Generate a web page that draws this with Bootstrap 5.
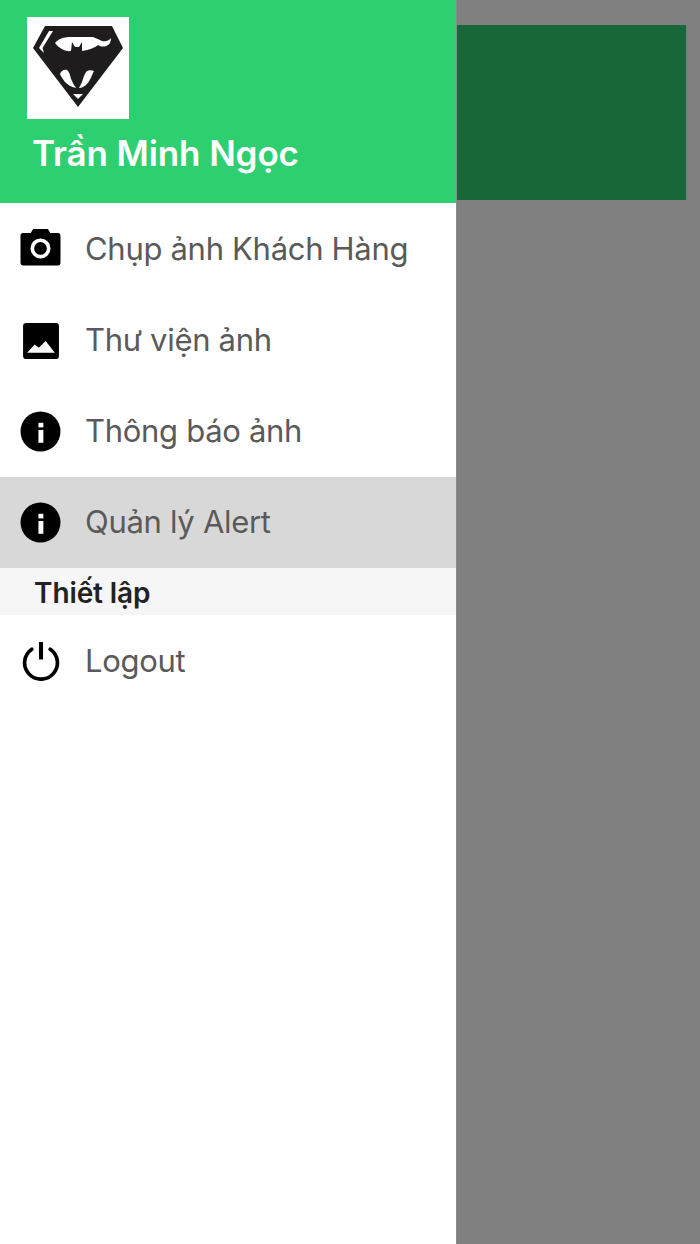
<!DOCTYPE html>
<html lang="vi">
<head>
    <meta charset="UTF-8">
    <meta name="viewport" content="width=device-width, initial-scale=1.0">
    <title>Menu</title>
    <link href="https://cdn.jsdelivr.net/npm/bootstrap@5.3.0/dist/css/bootstrap.min.css" rel="stylesheet">
    <style>
        html, body { height: 100%; }
        body { font-family: Inter, "Noto Sans", sans-serif; background: #808080; overflow: hidden; }
        .drawer { width: 456px; background: #fff; }
        .drawer-head { height: 203px; background: #2ecf71; padding: 17px 0 0 27px; }
        .logo-box { width: 102px; height: 102px; background: #fff; }
        .user-name { font-size: 35px; font-weight: 600; color: #fff; margin: 14px 0 0 5px; line-height: 40px; letter-spacing: -0.1px; }
        .menu-list { padding-top: 1px; }
        .menu-row { height: 91px; padding-left: 20px; gap: 24px; color: #5a5a5a; font-size: 31px; letter-spacing: -0.3px; }
        .menu-row svg { width: 41px; height: 41px; flex: none; }
        .menu-row.is-active { background: #d8d8d8; }
        .menu-section { height: 47px; background: #f6f6f6; padding-left: 34px; font-size: 28px; font-weight: 600; color: #222; line-height: 51px; letter-spacing: -0.1px; }
        .logout-label { padding-top: 2px; }
        .backdrop { background: #808080; border-left: 1px solid #8c8c8c; }
        .dim-block { height: 175px; margin: 25px 13px 0 0; background: #18673a; border-right: 1px solid #747f78; }
    </style>
</head>
<body>
    <div class="d-flex h-100">
        <!-- menu -->
        <div class="drawer h-100">
            <div class="drawer-head">
                <div class="logo-box d-flex align-items-center justify-content-center">
                    <svg width="102" height="102" viewBox="0 0 102 102">
                        <path fill="#1f1c1e" d="M18 9H85L96 31L51 90L6 31Z"/>
                        <path fill="#fff" d="M22 14H26L15.5 31L17 36L12 31Z"/>
                        <path fill="#fff" d="M28 26C31 22 37 20 43 20H66L73 23C76 25 81 25 84 21C84 24 83 27 81 28C78 30 74 30 71 28C69 30 62 33 55 34V25L52 30H48L45 25L44 34C38 35 32 31 28 26Z"/>
                        <path fill="#fff" d="M33 57C34 54 37 52 40 53C43 55 43 60 45 64C46 67 48 69 49 71C44 70 41 68 38 65C36 62 34 60 33 57Z"/>
                        <path fill="#fff" d="M67 54C64 53 61 53 59 55C57 58 56 62 55 65L52 71C55 71 58 69 60 67C63 64 65 58 67 54Z"/>
                        <path fill="#fff" d="M46 77H56L51 82Z"/>
                    </svg>
                </div>
                <div class="user-name">Trần Minh Ngọc</div>
            </div>

            <div class="menu-list">
                <div class="menu-row d-flex align-items-center">
                    <svg viewBox="0 0 40 40">
                        <path fill="#000" d="M3 4H10.5L12.5 .5Q13 -.5 14 -.5H26Q27 -.5 27.5 .5L29.5 4H37Q39.5 4 39.5 6.5V33Q39.5 35.5 37 35.5H3Q.5 35.5 .5 33V6.5Q.5 4 3 4Z"/>
                        <circle cx="20" cy="19" r="8" fill="none" stroke="#fff" stroke-width="3.6"/>
                    </svg>
                    <span>Chụp ảnh Khách Hàng</span>
                </div>
                <div class="menu-row d-flex align-items-center">
                    <svg viewBox="0 0 40 40">
                        <rect x="3" y="3" width="35" height="35" rx="3" fill="#000"/>
                        <path fill="#fff" d="M7 32L14.3 24L18.3 27L25 20.5L34 32Z"/>
                    </svg>
                    <span>Thư viện ảnh</span>
                </div>
                <div class="menu-row d-flex align-items-center">
                    <svg viewBox="0 0 40 40">
                        <circle cx="20" cy="20" r="19.5" fill="#000"/>
                        <rect x="18" y="11.5" width="4.8" height="4.5" fill="#fff"/>
                        <rect x="18" y="18.5" width="4.8" height="12.5" fill="#fff"/>
                    </svg>
                    <span>Thông báo ảnh</span>
                </div>
                <div class="menu-row is-active d-flex align-items-center">
                    <svg viewBox="0 0 40 40">
                        <circle cx="20" cy="20" r="19.5" fill="#000"/>
                        <rect x="18" y="11.5" width="4.8" height="4.5" fill="#fff"/>
                        <rect x="18" y="18.5" width="4.8" height="12.5" fill="#fff"/>
                    </svg>
                    <span>Quản lý Alert</span>
                </div>
                <div class="menu-section">Thiết lập</div>
                <div class="menu-row d-flex align-items-center">
                    <svg viewBox="0 0 40 40">
                        <path fill="none" stroke="#000" stroke-width="3.6" stroke-linecap="round" d="M11.5 9A16 16 0 1 0 29.5 9"/>
                        <path fill="none" stroke="#000" stroke-width="4" d="M20.5 2V19"/>
                    </svg>
                    <span class="logout-label">Logout</span>
                </div>
            </div>
        </div>

        <!-- phan nen mo -->
        <div class="backdrop flex-grow-1 h-100">
            <div class="dim-block"></div>
        </div>
    </div>
    <script src="https://cdn.jsdelivr.net/npm/bootstrap@5.3.0/dist/js/bootstrap.bundle.min.js"></script>
</body>
</html>
